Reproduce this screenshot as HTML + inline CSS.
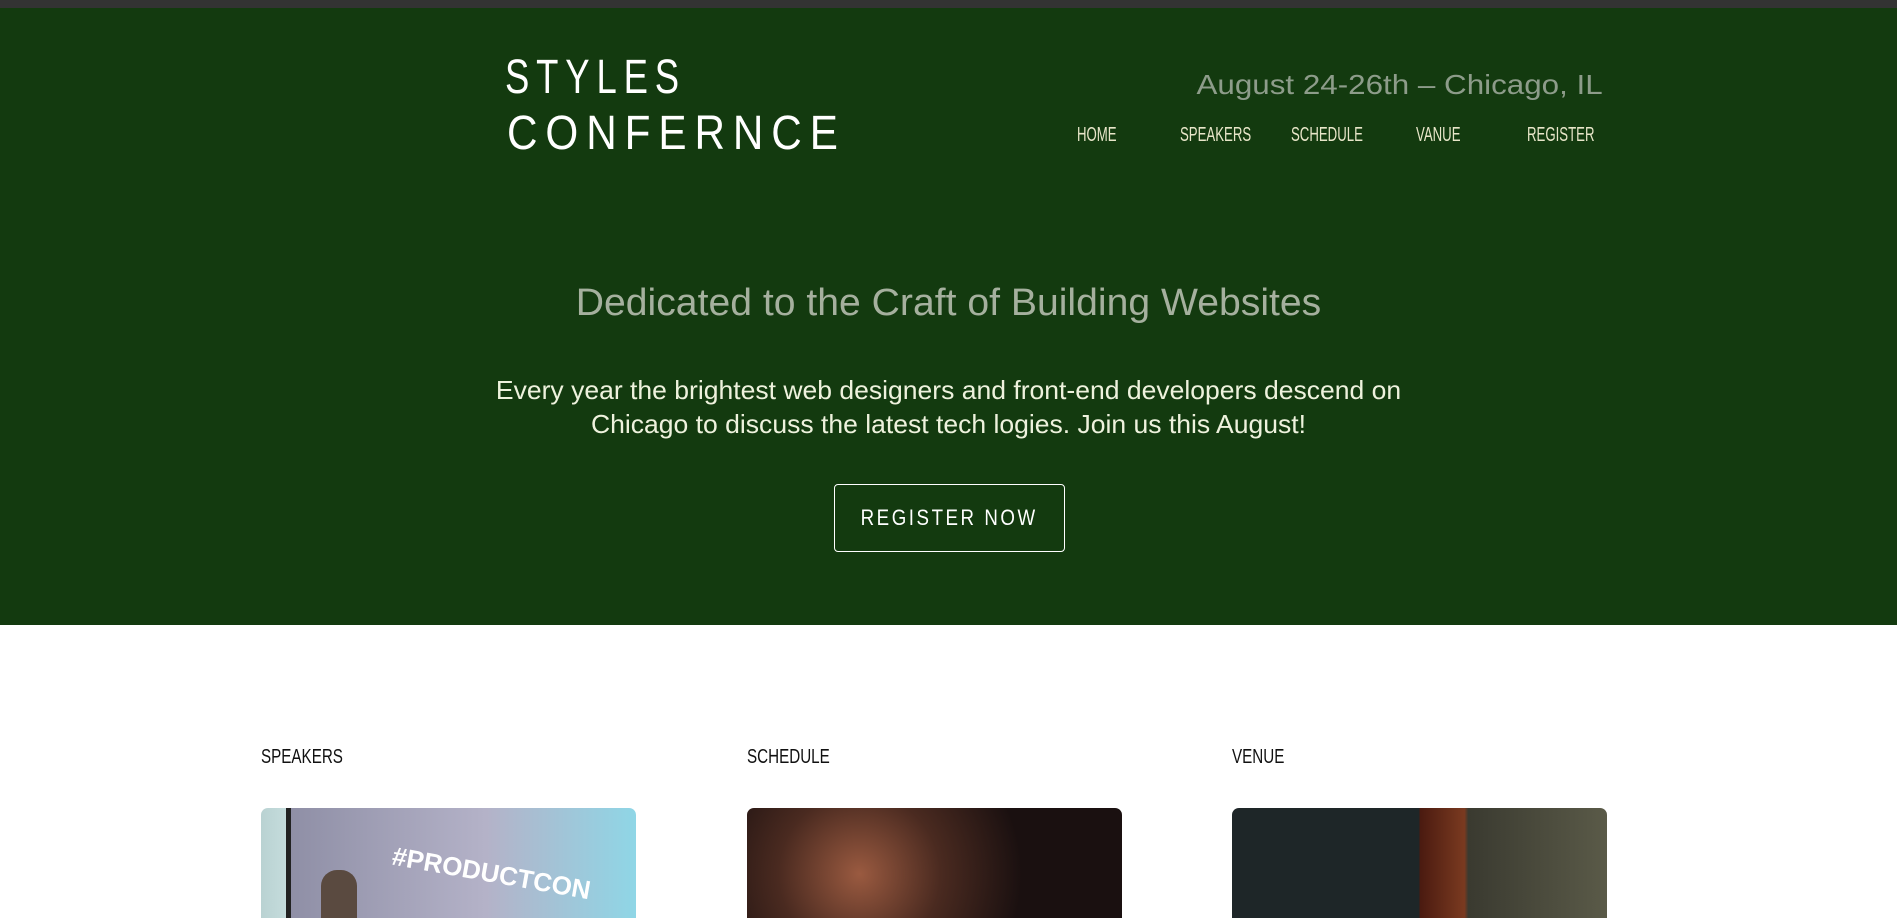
<!DOCTYPE html>
<html><head><meta charset="utf-8"><style>
*{margin:0;padding:0;box-sizing:border-box}
body{width:1897px;height:907px;overflow:hidden;background:#fff;font-family:"Liberation Sans",sans-serif;position:relative}
.top{position:absolute;left:0;top:0;width:1897px;height:8px;background:#333}
.hero{position:absolute;left:0;top:8px;width:1897px;height:617px;background:#133a0f}
.abs{position:absolute;white-space:nowrap}
.logo{color:#fff;font-size:48px;letter-spacing:9px;font-weight:normal;transform-origin:left top}
.date{right:294px;top:69px;color:#8d9c8a;font-size:28px;transform-origin:right top;transform:scaleX(1.12)}
.nav{top:124px;color:#e8e6c9;font-size:20px;transform-origin:left top;transform:scaleX(.66)}
.h{left:0;width:1897px;text-align:center;top:282px;color:#a5b09e;font-size:38px;transform:scaleX(1.03)}
.p{left:0;width:1897px;text-align:center;top:373px;color:#eef2dd;font-size:26px;line-height:34px;transform:scaleX(1.02)}
.btn{position:absolute;left:834px;top:484px;width:231px;height:68px;border:1px solid #fff;border-radius:4px;color:#fff;font-size:22px;letter-spacing:3px;text-align:center;line-height:66px}
.sh{top:746px;color:#111;font-size:20px;transform-origin:left top;transform:scaleX(.76)}
.img{position:absolute;top:808px;width:375px;height:110px;border-radius:7px 7px 0 0;overflow:hidden}
</style></head><body>
<div class="top"></div>
<div class="hero"></div>
<div class="abs logo" style="left:505px;top:50px;transform:scaleX(.76)">STYLES</div>
<div class="abs logo" style="left:507px;top:106px;transform:scaleX(.88)">CONFERNCE</div>
<div class="abs date">August 24-26th – Chicago, IL</div>
<div class="abs nav" style="left:1077px">HOME</div>
<div class="abs nav" style="left:1180px">SPEAKERS</div>
<div class="abs nav" style="left:1291px">SCHEDULE</div>
<div class="abs nav" style="left:1416px">VANUE</div>
<div class="abs nav" style="left:1527px">REGISTER</div>
<div class="abs h">Dedicated to the Craft of Building Websites</div>
<div class="abs p">Every year the brightest web designers and front-end developers descend on<br>Chicago to discuss the latest tech logies. Join us this August!</div>
<div class="btn"><span style="display:inline-block;transform:scaleX(.85)">REGISTER NOW</span></div>
<div class="abs sh" style="left:261px">SPEAKERS</div>
<div class="abs sh" style="left:747px">SCHEDULE</div>
<div class="abs sh" style="left:1232px">VENUE</div>
<div class="img" style="left:261px;background:linear-gradient(90deg,#b9d2d2 0,#c5dcdc 25px,#222 25px,#222 30px,#8f8fa6 30px,#b4b2c8 60%,#8fd6e6 100%)">
<div style="position:absolute;left:130px;top:50px;color:#fff;font-weight:bold;font-size:26px;transform:rotate(10deg)">#PRODUCTCON</div>
<div style="position:absolute;left:60px;top:62px;width:36px;height:50px;border-radius:16px 16px 0 0;background:#5a4a40"></div></div>
<div class="img" style="left:747px;background:radial-gradient(circle at 30% 60%,#9a5a40 0,#4a2a20 30%,#1a1010 60%),#111"></div>
<div class="img" style="left:1232px;background:linear-gradient(90deg,#1e2628 0,#1e2628 50%,#4a1a10 50%,#7a3a20 62%,#3a3a30 63%,#5a5a48 100%)"></div>
</body></html>
